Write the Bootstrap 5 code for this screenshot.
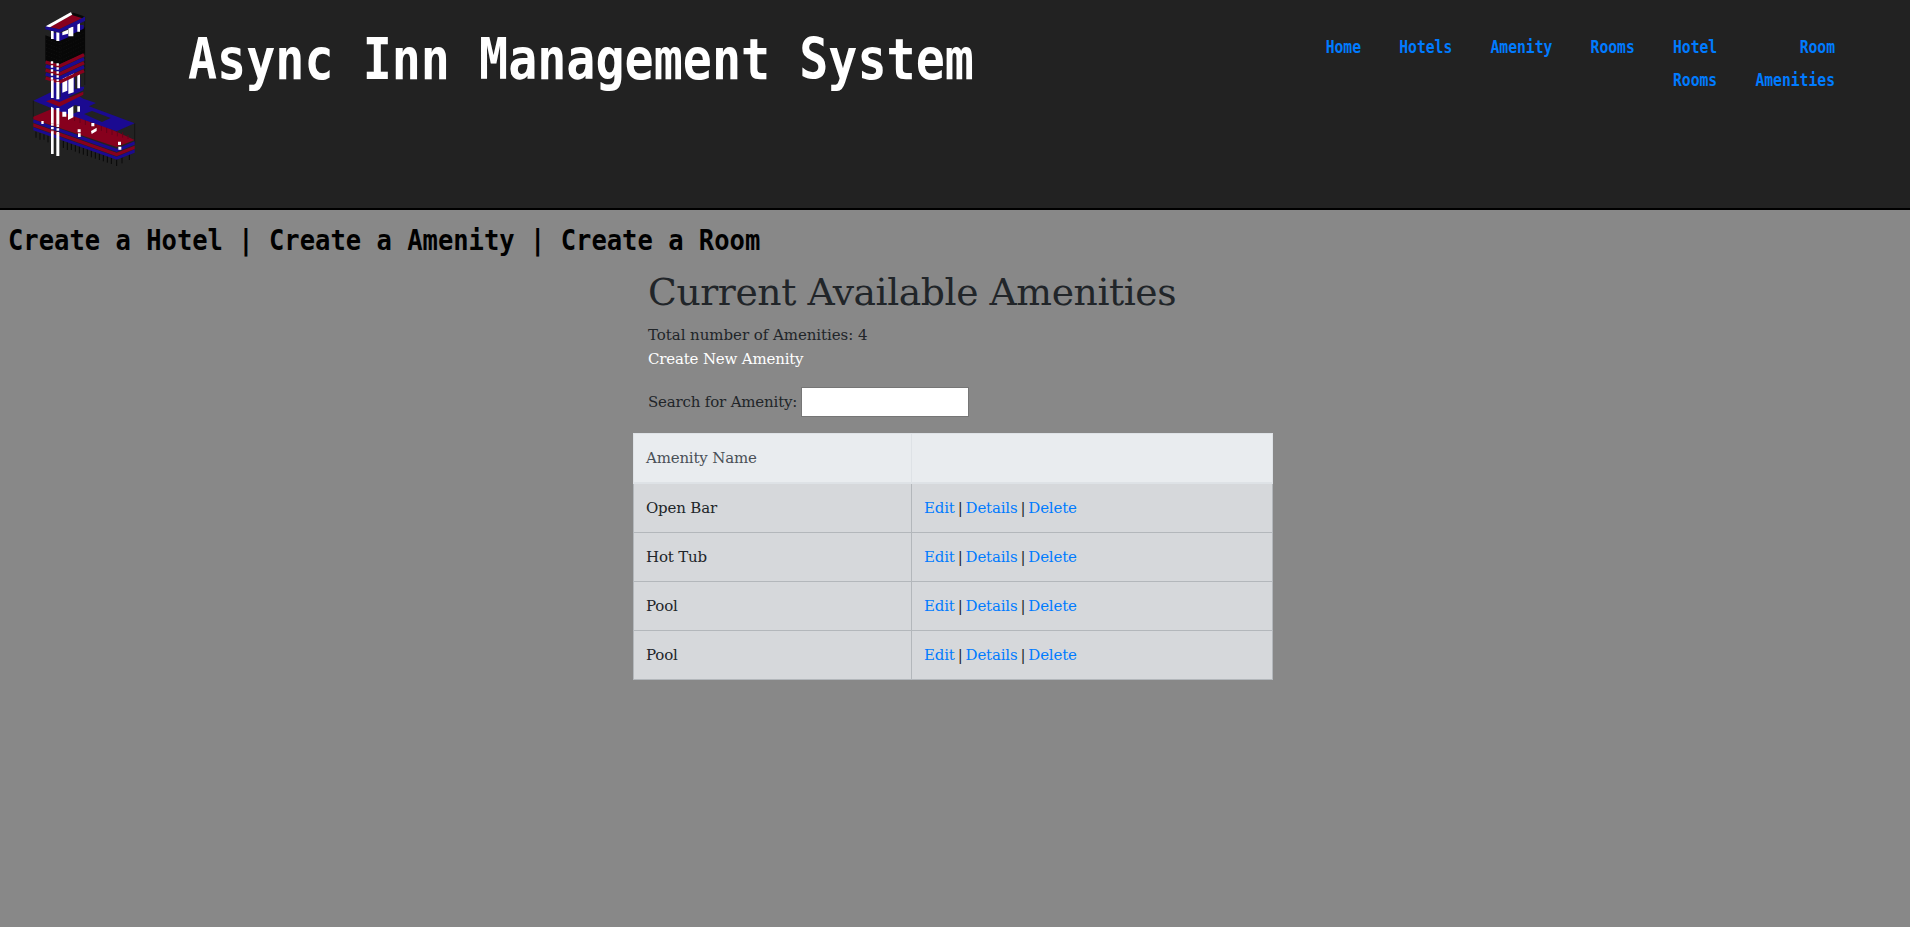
<!DOCTYPE html>
<html lang="en">
<head>
<meta charset="utf-8">
<meta name="viewport" content="width=device-width, initial-scale=1">
<title>Async Inn Management System</title>
<link href="https://cdn.jsdelivr.net/npm/bootstrap@5.3.0/dist/css/bootstrap.min.css" rel="stylesheet">
<style>
body{background:#888;color:#212529;font-family:"DejaVu Serif",serif;font-size:15px;letter-spacing:-.18px;line-height:24px}
a{color:#007bff;text-decoration:none}
.site-header{height:210px;background:#222;border-bottom:2px solid #000;padding-left:20px;padding-right:75px}
.logo{width:130px;height:170px;flex:none}
.pixel{font-family:"DejaVu Sans Mono",monospace;font-weight:700;white-space:nowrap;letter-spacing:0}
.site-title{font-size:48.35px;line-height:86px;margin:16px 0 0 38px;color:#fff}
.site-title span{display:inline-block;transform:scaleY(1.17)}
.site-nav{gap:38.2px;margin-top:30px;font-size:14.7px;line-height:33px;text-align:right}
.site-nav span{display:block;transform:scaleY(1.22)}
.quick{font-size:25.5px;line-height:60px;padding-left:8px;height:46px}
.quick span{display:inline-block;transform:scaleY(1.14);color:#000}
.quick a{color:#000}
.main-col{width:640px;margin-left:633px}
.intro{padding-left:15px}
.intro h1{font-size:37.7px;letter-spacing:-.43px;line-height:48px;margin:12px 0 7px;font-weight:400;white-space:nowrap}
.total{letter-spacing:-.05px}
.search-box{width:168px;height:30px;border:1px solid #767676;background:#fff;margin-left:4px}
.search-label{width:149px;white-space:nowrap}
.amenities{--bs-table-bg:#d6d8db;border-color:#b3b7bb;margin:16px 0 0;table-layout:fixed}
.amenities th,.amenities td{padding:12px!important;border:1px solid #b3b7bb}
.amenities th{background:#e9ecef;color:#495057;border-color:#dee2e6;border-bottom:2px solid #dee2e6;font-weight:400;height:49px;line-height:23px}
.amenities td+td{word-spacing:-1.6px}
.name-col{width:278px}
</style>
</head>
<body>
<header class="site-header d-flex align-items-start">
<svg class="logo" viewBox="0 0 390 510" aria-hidden="true">
<!-- lower wing -->
<g stroke="#080808" stroke-width="3" fill="none">
<path d="M48 395v18M60 399v20M72 403v16M84 407v20M130 420v24M142 425v25M154 430v20M166 435v20M178 438v22M190 442v22M202 446v22M214 450v22M226 454v22M238 458v22M250 462v22M262 466v22M274 470v22M290 474v24M306 470v20M328 462v18"/>
<path d="M40 302v55M344 370v60M290 395v40M194 50v205" stroke-width="1.5"/>
</g>
<path fill="#1b0a91" d="M40 382L290 470 344 448V458L290 479 40 391z"/>
<path fill="#87001d" d="M40 370L290 458 344 437V447L290 469 40 380z"/>
<path fill="#1b0a91" d="M40 358L290 446 344 424V434L290 456 40 368z"/>
<path fill="#87001d" d="M40 350L118 317 344 420 290 441 40 358z"/>
<path stroke="#65001a" stroke-width="3" d="M132 337v18M148 340v18M164 345v18M180 349v20M196 355v20M212 361v20M228 367v20M244 373v20M260 379v20M276 385v20M292 391v18M308 397v16M324 405v12"/>
<path fill="#1b0a91" d="M40 302L94 276 118 292 180 290 190 296 228 309 207 319 344 370 290 394 165 350 100 327z"/>
<path fill="#222" d="M192 342L216 333 272 354 246 366zM142 330L165 315 180 319 180 333 157 342z"/>
<path fill="#87001d" d="M78 304L96 298 118 306 190 275V284L118 320z"/>
<path fill="#1b0a91" d="M122 291L190 262V271L122 301z"/>
<path fill="#fff" d="M127 335h12v15h-12zM144 328l16-10v34l-16 8zM172 319h8v16h-8zM64 363h7v9h-7zM173 388h9v9h-9zM174 400h8v11h-8zM214 369h9v10h-9zM213 393l17-10v10l-15 9zM294 425h9v10h-9zM295 440h9v9h-9z"/>
<!-- tower -->
<path fill="#1b0a91" d="M93 235h25v50H93zM122 232h70v34l-70 28z"/>
<path fill="#222" d="M164 225h8v42h-8zM181 220h12v40h-12z"/>
<path fill="#fff" d="M127 236l15-8v44l-15 6zM145 227l16-8v58l-16 5zM172 218h8v47h-8z"/>
<path fill="#070707" d="M76 106L116 120 195 82V160L120 192 76 182z"/>
<path stroke="#1d1d1d" stroke-dasharray="4 4" fill="none" d="M78 118l42 16 72-35M78 130l42 16 72-35M78 142l42 16 72-35M78 154l42 16 72-35M78 166l42 16 72-35M120 122v64"/>
<g stroke-width="10" fill="none">
<path stroke="#87001d" d="M77 186L118 199 192 164"/>
<path stroke="#1b0a91" d="M77 198L118 211 192 176"/>
<path stroke="#87001d" d="M77 210L118 223 192 188"/>
<path stroke="#1b0a91" d="M77 222L118 235 192 200"/>
<path stroke="#87001d" d="M77 234L118 247 192 212"/>
</g>
<path stroke="#fff" stroke-width="7" stroke-dasharray="7 5" d="M96 184v56M113 190v54"/>
<path fill="#fff" d="M93 241h8v53h-8zM109 246h9v52h-9zM93 320l8 4v46h-8zM109 324h9v50h-9zM93 395h8v67h-8zM109 400h9v68h-9z"/>
<path stroke="#fff" stroke-width="8" stroke-dasharray="7 4" d="M97 370v25M113.500 374v27"/>
<!-- roof -->
<path fill="#1b0a91" d="M99 98h46v14l-28 12-18-7zM159 75h32v11l-32 15z"/>
<path fill="#fff" d="M93 93h8v24h-8zM109 97h9v26h-9zM127 96l17-7v12l-17 5zM145 80h15v29h-15zM172 68h8v27h-8z"/>
<path fill="#87001d" d="M88 82L158 43 188 54 118 88z"/>
<path fill="#fff" d="M77 79L152 37 159 43 86 84z"/>
<path fill="#090909" d="M154 40L161 38 192 49 187 55 158 46z"/>
<path fill="#1b0a91" d="M76 79L118 88 195 50V63L118 98 76 88z"/>
</svg>
<div class="site-title pixel"><span>Async Inn Management System</span></div>
<nav class="site-nav pixel d-flex ms-auto">
<a href="#"><span>Home</span></a><a href="#"><span>Hotels</span></a><a href="#"><span>Amenity</span></a><a href="#"><span>Rooms</span></a>
<a href="#"><span>Hotel</span><span>Rooms</span></a>
<a href="#"><span>Room</span><span>Amenities</span></a>
</nav>
</header>
<div class="quick pixel"><span><a href="#">Create a Hotel</a> | <a href="#">Create a Amenity</a> | <a href="#">Create a Room</a></span></div>
<main class="main-col">
<div class="intro">
<h1>Current Available Amenities</h1>
<div class="total">Total number of Amenities: 4</div>
<div><a href="#" class="text-white">Create New Amenity</a></div>
<form class="d-flex align-items-center mt-3"><label for="q" class="search-label">Search for Amenity:</label><input id="q" type="text" class="search-box"></form>
</div>
<table class="table amenities">
<thead><tr><th class="name-col">Amenity Name</th><th></th></tr></thead>
<tbody>
<tr><td>Open Bar</td><td><a href="#">Edit</a> | <a href="#">Details</a> | <a href="#">Delete</a></td></tr>
<tr><td>Hot Tub</td><td><a href="#">Edit</a> | <a href="#">Details</a> | <a href="#">Delete</a></td></tr>
<tr><td>Pool</td><td><a href="#">Edit</a> | <a href="#">Details</a> | <a href="#">Delete</a></td></tr>
<tr><td>Pool</td><td><a href="#">Edit</a> | <a href="#">Details</a> | <a href="#">Delete</a></td></tr>
</tbody>
</table>
</main>
<script src="https://cdn.jsdelivr.net/npm/bootstrap@5.3.0/dist/js/bootstrap.bundle.min.js"></script>
</body>
</html>
